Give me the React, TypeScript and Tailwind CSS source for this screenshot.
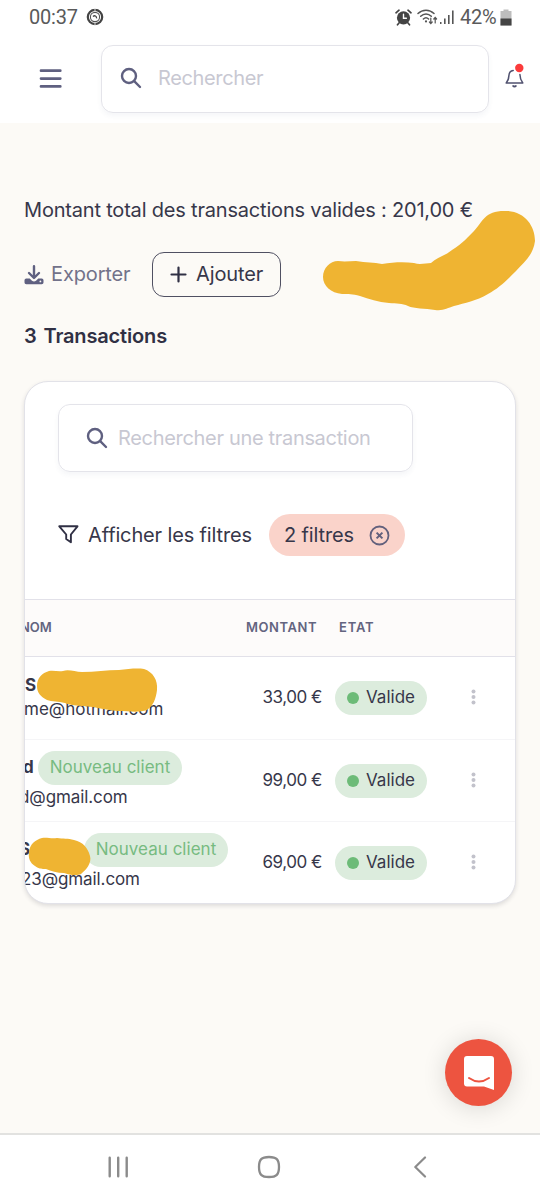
import type { ReactNode } from "react";
import clsx from "clsx";

type Row = {
	name: string;
	mail: string;
	amount: string;
	isNew: boolean;
	rowClass: string;
	nameClass: string;
	mailClass: string;
};

const rows: Row[] = [
	{ name: "S", mail: "me@hotmail.com", amount: "33,00 €", isNew: false, rowClass: "h-[83px] border-b", nameClass: "w-[12px]", mailClass: "-ml-[1px] tracking-normal" },
	{ name: "d", mail: "d@gmail.com", amount: "99,00 €", isNew: true, rowClass: "h-[82px] border-b", nameClass: "-ml-[2px] w-[15px]", mailClass: "-ml-[6px] tracking-[-0.1px]" },
	{ name: "Sa", mail: "23@gmail.com", amount: "69,00 €", isNew: true, rowClass: "h-[81px]", nameClass: "-ml-[6px] w-[65px]", mailClass: "-ml-[4px] tracking-[-0.1px]" },
];

function SearchIcon() {
	return (
		<svg className="h-[22px] w-[22px] shrink-0" viewBox="0 0 22 22" fill="none" stroke="#5f6080" strokeWidth="2.4" strokeLinecap="round">
			<circle cx="9" cy="9" r="7" />
			<path d="M14.2 14.2L20 20" />
		</svg>
	);
}

function StatusBar() {
	return (
		<div className="flex h-[35px] items-center pr-[28px] pb-px pl-[29px] font-[Roboto] text-[20px] text-[#5a5a5a]">
			<div className="w-[49px] leading-none tracking-[-0.2px] whitespace-nowrap">00:37</div>
			<svg className="ml-[8px] h-[18px] w-[18px]" viewBox="0 0 18 18" fill="none">
				<circle cx="9" cy="9" r="7.2" stroke="#444" strokeWidth="2.2" />
				<circle cx="9" cy="9" r="4.6" stroke="#555" strokeWidth="1.1" />
				<path d="M7 8.4C8.6 7 10.8 8 10.6 10.4" stroke="#444" strokeWidth="1.3" />
				<path d="M9 0V3M9 15V18" stroke="#fff" strokeWidth="0.8" />
			</svg>
			<svg className="ml-auto h-[17px] w-[17px]" viewBox="0 0 17 17" fill="none" stroke="#444" strokeLinecap="round">
				<circle cx="8.5" cy="8.8" r="6.6" fill="#444" stroke="none" />
				<path d="M1 3.8L4 1.2M16 3.8L13 1.2M4 14L2.5 15.8M13 14L14.5 15.8" strokeWidth="1.7" />
				<path d="M8.5 5.3V9.2H11.4" stroke="#fff" strokeWidth="1.4" />
			</svg>
			<svg className="ml-[5px] h-[18px] w-[22px]" viewBox="0 0 22 18" fill="none" stroke="#555" strokeWidth="1.5" strokeLinecap="round">
				<path d="M1 5.5C5.5 1 12.5 1 17 5.5M3.7 8.3C6.8 5.2 11.2 5.2 14.3 8.3M6.4 11C8 9.4 10 9.4 11.6 11" />
				<circle cx="9" cy="13.4" r="1.1" fill="#555" stroke="none" />
				<path d="M13.8 10V15.4M12.4 14L13.8 15.6L15.2 14M18.2 15V9.6M16.8 11L18.2 9.4L19.6 11" strokeWidth="1.2" />
			</svg>
			<svg className="ml-[1px] h-[16px] w-[14px]" viewBox="0 0 14 16" fill="#555">
				<rect x="0" y="13" width="1.5" height="2" />
				<rect x="4" y="9.5" width="1.6" height="5.5" />
				<rect x="8" y="6" width="1.6" height="9" />
				<rect x="12" y="1.5" width="1.6" height="13.5" />
			</svg>
			<div className="ml-[6px] w-[38px] leading-none tracking-[-0.3px] whitespace-nowrap">42%</div>
			<svg className="ml-[2px] h-[17px] w-[12px]" viewBox="0 0 12 17">
				<path d="M3.5 0.5H8.5V2H11.5V16.5H0.5V2H3.5Z" fill="#bdbdbd" />
				<rect x="0.5" y="9.5" width="11" height="7" fill="#444" />
			</svg>
		</div>
	);
}

function Header() {
	return (
		<div className="flex h-[88px] items-start pt-[10px]">
			<svg className="mt-[22px] ml-[39px] h-[24px] w-[23px]" viewBox="0 0 23 24" stroke="#5f6080" strokeWidth="2.7" strokeLinecap="round">
				<path d="M2 3.7H21.3M2 11.6H21.3M2 19.4H21.3" />
			</svg>
			<div className="ml-[39px] flex h-[68px] w-[388px] items-center rounded-[12px] border border-[#e4e4ea] pb-[2px] pl-[18px] shadow-[0_3px_5px_rgba(60,70,120,0.05)]">
				<SearchIcon />
				<span className="ml-[16px] text-[20px] tracking-[-0.36px] text-[#c8c8d2]">Rechercher</span>
			</div>
			<svg className="mt-[18px] ml-[15px] h-[26px] w-[20px]" viewBox="0 0 20 26" fill="none" stroke="#50516f" strokeWidth="1.5" strokeLinecap="round" strokeLinejoin="round">
				<path d="M9.2 7.4C6.3 7.8 5 10 4.9 12.6C4.8 15.6 4.2 17.8 2.2 20H18.8C17 17.8 16 15.3 15.9 11.6" />
				<path d="M9.2 23C9.8 23.8 11.2 23.8 11.8 23" strokeWidth="2" />
				<circle cx="15.3" cy="5" r="4.2" fill="#fb3b3b" stroke="none" />
			</svg>
		</div>
	);
}

function HeadCell({ className, children }: { className: string; children: ReactNode }) {
	return <div className={clsx("text-[13px] font-semibold whitespace-nowrap", className)}>{children}</div>;
}

function TableRow({ row }: { row: Row }) {
	return (
		<div className={clsx("flex items-center border-[#f5f5f7]", row.rowClass)}>
			<div className="flex h-full w-[215px] flex-col whitespace-nowrap">
				<div className={clsx("flex items-center", row.isNew ? "mt-[11px] h-[34px]" : "mt-[15px] h-[28px]")}>
					<span className={clsx("shrink-0 text-[17px] font-bold", row.nameClass)}>{row.name}</span>
					{row.isNew && (
						<span className="flex h-[34px] w-[144px] shrink-0 items-center justify-center rounded-full bg-[#dcecdd] text-[17px] tracking-[0.02px] text-[#77bb81]">
							Nouveau client
						</span>
					)}
				</div>
				<div className={clsx("text-[17px] leading-[24px]", !row.isNew && "-mt-[3px]", row.mailClass)}>{row.mail}</div>
			</div>
			<div className="w-[82px] text-right text-[17px] tracking-[-0.45px] whitespace-nowrap">{row.amount}</div>
			<div className="ml-[13px] flex h-[34px] w-[92px] items-center rounded-full bg-[#dcecdd] pl-[12px] text-[17px] tracking-normal">
				<span className="mr-[7px] h-[12px] w-[12px] rounded-full bg-[#6dbb78]" />
				Valide
			</div>
			<svg className="mb-[2px] ml-[44px] h-[16px] w-[5px]" viewBox="0 0 5 16" fill="#c2c2cb">
				<circle cx="2.5" cy="2.6" r="2" />
				<circle cx="2.5" cy="8" r="2" />
				<circle cx="2.5" cy="13.4" r="2" />
			</svg>
		</div>
	);
}

function TransactionsCard() {
	return (
		<div className="mt-[33px] h-[523px] w-[492px] overflow-hidden rounded-[24px] border border-[#e2e2e8] bg-white shadow-[0_2px_4px_rgba(40,40,60,0.14)]">
			<div className="mt-[22px] ml-[33px] flex h-[68px] w-[355px] items-center rounded-[12px] border border-[#e4e4ea] pl-[27px] shadow-[0_3px_5px_rgba(60,70,120,0.05)]">
				<SearchIcon />
				<span className="ml-[10px] text-[20px] tracking-[-0.32px] text-[#c8c8d2]">Rechercher une transaction</span>
			</div>
			<div className="mt-[42px] ml-[33px] flex h-[42px] items-center text-[20px] tracking-[-0.14px]">
				<svg className="h-[20px] w-[21px]" viewBox="0 0 21 20" fill="none" stroke="#303044" strokeWidth="1.9" strokeLinejoin="round">
					<path d="M1.3 1.3H19.5L12.9 9.5V17.2L8.2 14V9.5Z" />
				</svg>
				<span className="ml-[9px] w-[164px] whitespace-nowrap">Afficher les filtres</span>
				<div className="ml-[17px] flex h-[42px] w-[136px] items-center rounded-full bg-[#fad3ca] pl-[15px]">
					<span className="w-[71px] whitespace-nowrap">2 filtres</span>
					<svg className="ml-[14px] h-[21px] w-[21px]" viewBox="0 0 21 21" fill="none" stroke="#62607c" strokeWidth="1.8">
						<circle cx="10.5" cy="10.5" r="9" />
						<path d="M7.6 7.6L13.4 13.4M13.4 7.6L7.6 13.4" strokeWidth="2" />
					</svg>
				</div>
			</div>
			<div className="mt-[43px] flex h-[58px] items-center border-y border-[#e2e1e9] bg-[#fdfbfa] text-[#63647f]">
				<HeadCell className="-ml-[5px] w-[226px]">NOM</HeadCell>
				<HeadCell className="w-[93px] tracking-[0.55px]">MONTANT</HeadCell>
				<HeadCell className="tracking-[0.8px]">ETAT</HeadCell>
			</div>
			{rows.map((row) => (
				<TableRow key={row.mail} row={row} />
			))}
		</div>
	);
}

export default function App() {
	return (
		<div className="relative flex h-[1200px] w-[540px] flex-col overflow-hidden bg-white font-[Inter,sans-serif] text-[#37374a]">
			<StatusBar />
			<Header />
			<div className="h-[1010px] bg-[#fcfaf6] px-[24px] pt-[75px]">
				<div className="h-[24px] text-[20px] leading-[24px] tracking-[-0.19px] whitespace-nowrap">Montant total des transactions valides : 201,00 €</div>
				<div className="mt-[30px] flex h-[45px] items-center text-[20px] tracking-[-0.13px]">
					<svg className="h-[20px] w-[20px]" viewBox="0 0 20 20" fill="none" stroke="#5f6080" strokeLinecap="round" strokeLinejoin="round">
						<path d="M10 1.3V12M5 8L10 13L15 8" strokeWidth="2.4" />
						<path d="M2.3 13.5H5.7L8 15.8Q10 17.2 12 15.8L14.3 13.5H17.7Q19.5 13.5 19.5 15.3V17.4Q19.5 19.2 17.7 19.2H2.3Q0.5 19.2 0.5 17.4V15.3Q0.5 13.5 2.3 13.5Z" fill="#5f6080" stroke="none" />
						<circle cx="16.4" cy="16.4" r="0.9" fill="#fcfaf6" stroke="none" />
					</svg>
					<span className="ml-[7px] w-[80px] pb-px whitespace-nowrap text-[#72728a]">Exporter</span>
					<button className="ml-[21px] flex h-[45px] w-[129px] items-center rounded-[12px] border border-[#505062] pl-[17px]">
						<svg className="h-[17px] w-[17px]" viewBox="0 0 17 17" stroke="#303044" strokeWidth="2.2" strokeLinecap="round">
							<path d="M8.5 1.5V15.5M1.5 8.5H15.5" />
						</svg>
						<span className="ml-[9px] pb-px">Ajouter</span>
					</button>
				</div>
				<div className="mt-[27px] h-[24px] text-[20px] leading-[24px] font-semibold tracking-[-0.15px] whitespace-nowrap text-[#303044]">
					<span className="mr-[2px]">3</span> Transactions
				</div>
				<TransactionsCard />
			</div>
			<div className="flex h-[67px] items-center border-t-2 border-[#e2e2e0] pb-[2px]">
				<svg className="ml-[107px] h-[22px] w-[22px]" viewBox="0 0 22 22" stroke="#8b8b8b" strokeWidth="2.4" strokeLinecap="round">
					<path d="M2.7 1.7V20.2M11.2 1.7V20.2M19.7 1.7V20.2" />
				</svg>
				<svg className="ml-[128px] h-[24px] w-[24px]" viewBox="0 0 24 24" fill="none" stroke="#8b8b8b" strokeWidth="2.3">
					<path d="M12 2C19.5 2 22 4.5 22 12S19.5 22 12 22S2 19.5 2 12S4.5 2 12 2Z" />
				</svg>
				<svg className="ml-[132px] h-[22px] w-[15px]" viewBox="0 0 15 22" fill="none" stroke="#8b8b8b" strokeWidth="2.2" strokeLinecap="round" strokeLinejoin="round">
					<path d="M12 1.5L2.3 11L12 20.5" />
				</svg>
			</div>

			{/* floating chat launcher */}
			<div className="absolute top-[1039px] left-[445px] flex h-[67px] w-[67px] items-center justify-center rounded-full bg-[#ed5440] shadow-[0_2px_24px_rgba(0,0,0,0.14)]">
				<svg className="h-[34px] w-[30px]" viewBox="0 0 30 34" fill="none">
					<path d="M3 0H27Q30 0 30 3V34L20 30.5H3Q0 30.5 0 27.5V3Q0 0 3 0Z" fill="#fff" />
					<path d="M5 22Q15 29 25 22" stroke="#ed5440" strokeWidth="2" strokeLinecap="round" />
				</svg>
			</div>

			{/* marker strokes */}
			<svg className="pointer-events-none absolute top-0 left-0 h-[1200px] w-[540px]" viewBox="0 0 540 1200" fill="#efb432">
				<path d="M338 261C345 262 350 261 356 261C366 263 374 262 382 264C394 262 405 262 414 263C420 265 426 263 431 263C437 257 445 256 452 250C463 243 468 237 474 231C483 221 485 210 507 211C525 212 535 226 535 241C533 256 524 262 516 271C506 281 499 288 488 294C476 301 465 303 454 306C447 308 444 311 435 310C425 308 414 309 408 306C402 303 397 304 389 303C378 302 369 299 360 296C352 294 349 294 342 294C331 293 323 286 323 277C323 268 330 261 338 261Z" />
				<path d="M49 671C54 670 58 672 63 671C69 669 75 672 82 672C95 672 107 670 119 670C128 669 137 668 144 669C153 672 158 680 157 690C156 699 153 706 147 710C139 713 128 711 118 711C104 710 93 706 82 706C73 705 70 705 65 703C58 701 52 702 47 700C41 697 37 693 37 686C37 678 42 673 49 671Z" />
				<path d="M42 838C47 837 51 839 57 838C63 839 68 838 74 840C83 842 88 848 90 856C92 863 86 870 81 874C77 876 69 875 64 873C57 873 51 871 46 869C42 869 39 869 35 866C30 863 28 858 29 852C30 844 35 840 42 838Z" />
			</svg>
		</div>
	);
}
